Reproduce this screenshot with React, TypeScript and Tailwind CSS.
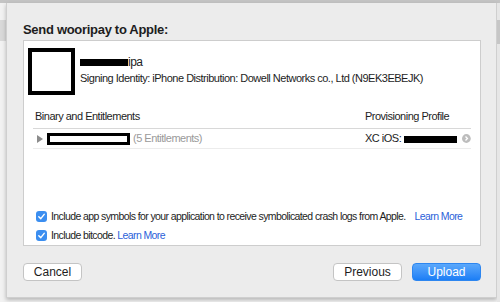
import React from 'react';

const font = { fontFamily: '"Helvetica Neue", "Liberation Sans", Arial, sans-serif' };

const Redact = ({ w }: { w: number }) => (
    <span className="inline-block h-[7px] bg-black align-middle" style={{ width: w }}></span>
);

const Check = () => (
    <span className="w-[11px] h-[11px] rounded-[3px] bg-[#3b8ef0] flex items-center justify-center shrink-0">
        <svg width="9" height="9" viewBox="0 0 10 10">
            <path d="M2 5.2 L4.2 7.4 L8 2.6" fill="none" stroke="white" strokeWidth="1.6" strokeLinecap="round" strokeLinejoin="round" />
        </svg>
    </span>
);

const App = () => {
    return (
        <div className="w-[500px] h-[302px] bg-[#f3f3f3] flex flex-col overflow-hidden text-[#1d1d1d] whitespace-nowrap" style={font}>
            {/* window behind */}
            <div className="h-[3px] bg-[#c4c4c4] shrink-0"></div>
            <div className="flex flex-1">
                <div className="w-[6px] flex flex-col">
                    <div className="h-[17px] bg-[#f2f2f2]"></div>
                    <div className="h-[21px] bg-[#d9d9d9]"></div>
                    <div className="flex-1 bg-[#f2f2f2]"></div>
                </div>

                {/* sheet */}
                <div className="w-[491px] h-[295px] bg-[#ececec] border-x border-b border-[#cfcfcf] shadow-[0_2px_4px_rgba(0,0,0,0.25)] flex flex-col pl-[16px] pr-[15px]">
                    <div className="text-[13px] font-bold pt-[19px] h-[37px] leading-[16px] tracking-[-0.3px]">Send wooripay to Apple:</div>

                    <div className="bg-white border border-[#cdcdcd] h-[206px] flex flex-col text-[11px] tracking-[-0.5px]">
                        <div className="flex pt-[7px] pl-[4px]">
                            <div className="w-[47px] h-[47px] border-[4px] border-black bg-white"></div>
                            <div className="pl-[5px] pt-[6px] flex flex-col">
                                <div className="text-[12px] leading-[16px] flex items-center">
                                    <Redact w={48} />ipa
                                </div>
                                <div className="leading-[14px] mt-[1px]">
                                    Signing Identity: iPhone Distribution: Dowell Networks co., Ltd (N9EK3EBEJK)
                                </div>
                            </div>
                        </div>

                        <div className="mx-[9px] mt-[10px]">
                            <div className="flex h-[24px] items-center pl-[2px] border-b border-[#d8d8d8]">
                                <div className="flex-1">Binary and Entitlements</div>
                                <div className="w-[106px]">Provisioning Profile</div>
                            </div>
                            <div className="flex h-[20px] items-center border-b border-[#ececec]">
                                <div className="flex-1 flex items-center">
                                    <svg width="6" height="8" viewBox="0 0 6 8" className="ml-[4px] mr-[4px]">
                                        <path d="M0 0 L6 4 L0 8 Z" fill="#8c8c8c" />
                                    </svg>
                                    <span className="inline-block w-[83px] h-[12px] border-[3px] border-black bg-white"></span>
                                    <span className="ml-[3px] text-[#9a9a9a]">(5 Entitlements)</span>
                                </div>
                                <div className="w-[106px] flex items-center">
                                    <span>XC iOS:</span>
                                    <span className="ml-[3px]"><Redact w={53} /></span>
                                    <svg width="9" height="9" viewBox="0 0 10 10" className="ml-[5px]">
                                        <circle cx="5" cy="5" r="5" fill="#bdbdbd" />
                                        <path d="M4 2.8 L6.2 5 L4 7.2" fill="none" stroke="white" strokeWidth="1.5" />
                                    </svg>
                                </div>
                            </div>
                        </div>

                        <div className="flex-1"></div>

                        <div className="flex flex-col gap-[8px] pl-[12px] pb-[4px] leading-[11px] text-[10.5px] tracking-[-0.6px]">
                            <div className="flex items-center gap-[4px]">
                                <Check />
                                <span>Include app symbols for your application to receive symbolicated crash logs from Apple.</span>
                                <span className="ml-[5px] text-[#2b5fd9]">Learn More</span>
                            </div>
                            <div className="flex items-center gap-[4px]">
                                <Check />
                                <span>Include bitcode. <span className="text-[#2b5fd9]">Learn More</span></span>
                            </div>
                        </div>
                    </div>

                    <div className="flex items-center pt-[17px]">
                        <button className="w-[59px] h-[18px] bg-white border border-[#c4c4c4] rounded-[4px] text-[12px] leading-[16px]">Cancel</button>
                        <div className="flex-1"></div>
                        <button className="w-[69px] h-[18px] bg-white border border-[#c4c4c4] rounded-[4px] text-[12px] leading-[16px] mr-[10px]">Previous</button>
                        <button className="w-[69px] h-[18px] rounded-[4px] text-[12px] leading-[16px] text-white bg-gradient-to-b from-[#5aa8fb] to-[#1a7ef6] border border-[#2d86f0]">Upload</button>
                    </div>
                </div>

                <div className="w-[3px] flex flex-col">
                    <div className="h-[17px] bg-[#e6e6e6]"></div>
                    <div className="h-[24px] bg-[#c6c6c6]"></div>
                    <div className="flex-1 bg-[#e6e6e6]"></div>
                </div>
            </div>
        </div>
    );
};

export default App;
